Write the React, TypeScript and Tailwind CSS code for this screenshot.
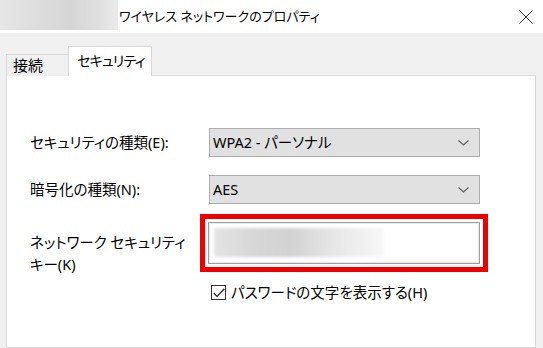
import React from "react";

const font = "[font-family:'Noto_Sans','Noto_Sans_CJK_JP',sans-serif] [font-feature-settings:'palt']";

function Chevron() {
  return (
    <svg width="11" height="6" viewBox="0 0 11 6" className="shrink-0">
      <polyline points="0.5,0.5 5.5,5 10.5,0.5" fill="none" stroke="#606060" strokeWidth="1.2" />
    </svg>
  );
}

function Combo({ text }: { text: string }) {
  return (
    <div className="ml-[9px] w-[271px] h-[29px] bg-[#e1e1e1] border border-[#adadad] flex items-center pl-[3px] pr-[10px] justify-between">
      <span className="text-[14.5px] text-black leading-none whitespace-nowrap">{text}</span>
      <Chevron />
    </div>
  );
}

export default function App() {
  return (
    <div className={`w-[543px] h-[348px] bg-[#f0f0f0] overflow-hidden flex flex-col ${font}`}>
      {/* Title bar */}
      <div className="h-[33px] bg-white flex items-start shrink-0">
        <div className="w-[118px] h-[30px] bg-[linear-gradient(90deg,#e6e6e6_0%,#dcdcdc_35%,#d6d6d6_60%,#e0e0e0_85%,#ebebeb_100%)] shrink-0" />
        <div className="h-[33px] flex items-center ml-[1px] text-[13px] text-black whitespace-nowrap">ワイヤレス ネットワークのプロパティ</div>
        <div className="flex-1" />
        <div className="h-[33px] flex items-center mr-[10px]">
          <svg width="14" height="14" viewBox="0 0 14 14">
            <line x1="0.5" y1="0.5" x2="13.5" y2="13.5" stroke="#333" strokeWidth="1" />
            <line x1="13.5" y1="0.5" x2="0.5" y2="13.5" stroke="#333" strokeWidth="1" />
          </svg>
        </div>
      </div>

      {/* Tabs */}
      <div className="pt-[13px] pl-[6px] flex items-end shrink-0 relative z-10">
        <div className="w-[63px] h-[22px] border border-b-0 border-[#d9d9d9] bg-[#f0f0f0] flex items-center pl-[6px] text-[15px] text-black whitespace-nowrap">接続</div>
        <div className="w-[84px] h-[30px] -ml-[1px] border border-b-0 border-[#d9d9d9] bg-white flex items-center pl-[8px] pb-[2px] text-[14px] tracking-[-0.8px] text-black whitespace-nowrap">セキュリティ</div>
      </div>

      {/* Panel */}
      <div className="ml-[6px] w-[530px] flex-1 bg-white border border-[#d9d9d9] -mt-[1px] pt-[52px] pl-[23px]">
        <div className="grid grid-cols-[170px_300px]">
          {/* row 1 */}
          <div className="h-[29px] flex items-center text-[14.5px] text-black whitespace-nowrap">セキュリティの種類(E):</div>
          <Combo text="WPA2 - パーソナル" />

          {/* row 2 */}
          <div className="mt-[18px] h-[29px] flex items-center text-[14.5px] text-black whitespace-nowrap">暗号化の種類(N):</div>
          <div className="mt-[18px]"><Combo text="AES" /></div>

          {/* row 3 */}
          <div className="mt-[10px] pt-[17px] text-[14.5px] leading-[22px] text-black whitespace-nowrap">
            ネットワーク セキュリティ<br />キー(K)
          </div>
          <div className="mt-[10px] w-[288px] h-[58px] border-[5px] border-[#ee0000] p-[3px]">
            <div className="w-full h-full bg-white border border-[#a0a0a0] shadow-[inset_0_0_0_1px_#e8e8e8] pl-[5px] pt-[5px]">
              <div className="w-[170px] h-[29px] bg-[linear-gradient(90deg,#e4e4e4_0%,#d8d8d8_20%,#d2d2d2_45%,#e6e6e6_70%,#f8f8f8_100%)] blur-[1.5px]" />
            </div>
          </div>

          {/* row 4 */}
          <div />
          <div className="mt-[10px] ml-[11px] flex items-center">
            <div className="w-[15px] h-[15px] border border-[#333] bg-white flex items-center justify-center shrink-0">
              <svg width="12" height="10" viewBox="0 0 12 10">
                <polyline points="0.8,5 4,8.4 11.2,1" fill="none" stroke="#222" strokeWidth="1.3" />
              </svg>
            </div>
            <span className="ml-[5px] text-[14.5px] text-black leading-none whitespace-nowrap">パスワードの文字を表示する(H)</span>
          </div>
        </div>
      </div>
    </div>
  );
}
